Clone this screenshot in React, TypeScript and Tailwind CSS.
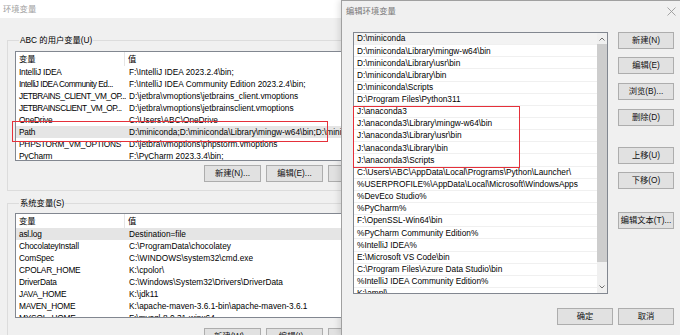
import React from "react";

const userVars: [string, string][] = [
  ["IntelliJ IDEA", "F:\\IntelliJ IDEA 2023.2.4\\bin;"],
  ["IntelliJ IDEA Community Ed...", "F:\\IntelliJ IDEA Community Edition 2023.2.4\\bin;"],
  ["JETBRAINS_CLIENT_VM_OP...", "D:\\jetbra\\vmoptions\\jetbrains_client.vmoptions"],
  ["JETBRAINSCLIENT_VM_OP...", "D:\\jetbra\\vmoptions\\jetbrainsclient.vmoptions"],
  ["OneDrive", "C:\\Users\\ABC\\OneDrive"],
  ["Path", "D:\\miniconda;D:\\miniconda\\Library\\mingw-w64\\bin;D:\\miniconda\\Library\\usr\\bin;"],
  ["PHPSTORM_VM_OPTIONS", "D:\\jetbra\\vmoptions\\phpstorm.vmoptions"],
  ["PyCharm", "F:\\PyCharm 2023.3.4\\bin;"],
];

const sysVars: [string, string][] = [
  ["asl.log", "Destination=file"],
  ["ChocolateyInstall", "C:\\ProgramData\\chocolatey"],
  ["ComSpec", "C:\\WINDOWS\\system32\\cmd.exe"],
  ["CPOLAR_HOME", "K:\\cpolor\\"],
  ["DriverData", "C:\\Windows\\System32\\Drivers\\DriverData"],
  ["JAVA_HOME", "K:\\jdk11"],
  ["MAVEN_HOME", "K:\\apache-maven-3.6.1-bin\\apache-maven-3.6.1"],
  ["MYSQL_HOME", "F:\\mysql-8.0.31-winx64"],
];

const paths = [
  "D:\\miniconda",
  "D:\\miniconda\\Library\\mingw-w64\\bin",
  "D:\\miniconda\\Library\\usr\\bin",
  "D:\\miniconda\\Library\\bin",
  "D:\\miniconda\\Scripts",
  "D:\\Program Files\\Python311",
  "J:\\anaconda3",
  "J:\\anaconda3\\Library\\mingw-w64\\bin",
  "J:\\anaconda3\\Library\\usr\\bin",
  "J:\\anaconda3\\Library\\bin",
  "J:\\anaconda3\\Scripts",
  "C:\\Users\\ABC\\AppData\\Local\\Programs\\Python\\Launcher\\",
  "%USERPROFILE%\\AppData\\Local\\Microsoft\\WindowsApps",
  "%DevEco Studio%",
  "%PyCharm%",
  "F:\\OpenSSL-Win64\\bin",
  "%PyCharm Community Edition%",
  "%IntelliJ IDEA%",
  "E:\\Microsoft VS Code\\bin",
  "C:\\Program Files\\Azure Data Studio\\bin",
  "%IntelliJ IDEA Community Edition%",
  "K:\\ampl\\",
];

function Btn({ label, className }: { label: string; className?: string }) {
  return (
    <button
      type="button"
      className={`h-[17px] w-[56px] shrink-0 flex items-center justify-center bg-[#e1e1e1] border border-[#adadad] text-[#111] whitespace-nowrap ${className ?? ""}`}
    >
      {label}
    </button>
  );
}

function VarTable({ rows, selected, height, marked }: { rows: [string, string][]; selected: number; height: string; marked?: boolean }) {
  return (
    <div className={`relative bg-white border border-[#828790] ${height}`}>
      <div className="h-full overflow-hidden">
        <div className="flex h-[14px] items-center">
          <div className="w-[109px] pl-[3px] border-r border-[#e5e5e5] h-full flex items-center">变量</div>
          <div className="pl-[3px]">值</div>
        </div>
        {rows.map(([k, v], i) => (
          <div key={k} className={`flex h-[12px] items-center whitespace-nowrap ${i === selected ? "bg-[#e5e5e5]" : ""}`}>
            <div className={`w-[110px] shrink-0 pl-[3px] overflow-hidden ${k.endsWith("...") ? "tracking-[-0.5px]" : "tracking-[-0.2px]"}`}>{k}</div>
            <div className="pl-[3px]">{v}</div>
          </div>
        ))}
      </div>
      {marked && (
        <div className="absolute left-[-4px] top-[69px] w-[316px] h-[21px] border-[1.5px] border-[#e5303a]" />
      )}
    </div>
  );
}

export default function App() {
  return (
    <div className="w-[680px] h-[335px] flex overflow-hidden bg-[#f0f0f0] text-[8.3px] text-black font-['Liberation_Sans','Noto_Sans_CJK_SC',sans-serif]">
      {/* 环境变量 (behind) */}
      <div className="w-[341px] shrink-0 overflow-hidden flex flex-col">
        <div className="h-[18px] shrink-0 bg-white flex items-center pl-[3px] text-[#a0a0a0]">环境变量</div>
        <div className="w-[440px] shrink-0 pl-[7px] pt-[17px]">
          <fieldset className="border border-[#dcdcdc] pl-[7px] pr-[6px] pb-[8px]">
            <legend className="ml-[4px] px-[1px] leading-[10px]">ABC 的用户变量(U)</legend>
            <div className="mt-[6px]">
              <VarTable rows={userVars} selected={5} height="h-[110px]" marked />
            </div>
            <div className="mt-[4px] flex gap-[5px] pl-[189px]">
              <Btn label="新建(N)..." className="w-[57px]" />
              <Btn label="编辑(E)..." className="w-[57px]" />
              <Btn label="删除(D)" className="w-[57px]" />
            </div>
          </fieldset>
          <fieldset className="mt-[7px] border border-[#dcdcdc] pl-[7px] pr-[6px] pb-[8px]">
            <legend className="ml-[4px] px-[1px] leading-[10px]">系统变量(S)</legend>
            <div className="mt-[5px]">
              <VarTable rows={sysVars} selected={0} height="h-[105px]" />
            </div>
            <div className="mt-[10px] flex gap-[5px] pl-[189px]">
              <Btn label="新建(W)..." className="w-[57px]" />
              <Btn label="编辑(I)..." className="w-[57px]" />
              <Btn label="删除(L)" className="w-[57px]" />
            </div>
          </fieldset>
        </div>
      </div>

      {/* 编辑环境变量 dialog */}
      <div className="flex-1 flex flex-col border-l border-t border-[#a0a0a0] bg-[#f0f0f0] shadow-[-2px_0_6px_rgba(0,0,0,0.12)]">
        <div className="h-[21px] shrink-0 flex items-center justify-between pl-[4px] pr-[4px] text-[#777]">
          <span>编辑环境变量</span>
          <svg width="9" height="9" viewBox="0 0 9 9">
            <path d="M0.5 0.5L8.5 8.5M8.5 0.5L0.5 8.5" stroke="#9a9a9a" strokeWidth="0.9" />
          </svg>
        </div>
        <div className="flex pl-[11px] pt-[10px] gap-[10px]">
          <div className="relative w-[255px] h-[262px] bg-white border border-[#828790] flex">
            <div className="flex-1 overflow-hidden">
              {paths.map((p, i) => (
                <div
                  key={p}
                  className={`h-[12.15px] flex items-center pl-[3px] whitespace-nowrap border-b border-[#f0f0f0] ${i === 0 ? "bg-[#f3f3f3]" : ""}`}
                >
                  {p}
                </div>
              ))}
            </div>
            <div className="w-[10px] shrink-0 bg-[#f0f0f0] flex flex-col">
              <div className="h-[11px] flex items-center justify-center">
                <svg width="6" height="4" viewBox="0 0 6 4">
                  <path d="M0.5 3.5L3 1L5.5 3.5" fill="none" stroke="#606060" strokeWidth="0.9" />
                </svg>
              </div>
              <div className="h-[218px] bg-[#cdcdcd]" />
              <div className="flex-1" />
              <div className="h-[12px] flex items-center justify-center">
                <svg width="6" height="4" viewBox="0 0 6 4">
                  <path d="M0.5 0.5L3 3L5.5 0.5" fill="none" stroke="#606060" strokeWidth="0.9" />
                </svg>
              </div>
            </div>
            <div className="absolute left-[-1px] top-[73px] w-[167px] h-[62px] border-[1.5px] border-[#e5303a]" />
          </div>
          <div className="flex flex-col">
            <Btn label="新建(N)" />
            <Btn label="编辑(E)" className="mt-[8px]" />
            <Btn label="浏览(B)..." className="mt-[9px]" />
            <Btn label="删除(D)" className="mt-[9px]" />
            <Btn label="上移(U)" className="mt-[21px]" />
            <Btn label="下移(O)" className="mt-[8px]" />
            <Btn label="编辑文本(T)..." className="mt-[23px]" />
          </div>
        </div>
        <div className="mt-[14px] flex justify-end gap-[5px] pr-[6px]">
          <Btn label="确定" />
          <Btn label="取消" />
        </div>
      </div>
    </div>
  );
}
